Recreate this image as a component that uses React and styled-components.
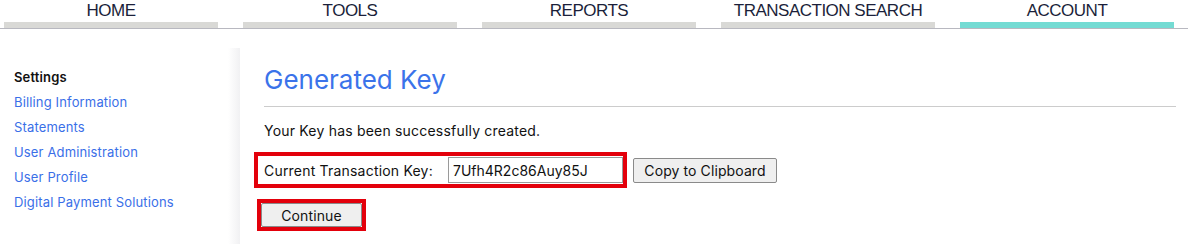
import React from "react";
import styled, { createGlobalStyle } from "styled-components";

const tabs = ["HOME", "TOOLS", "REPORTS", "TRANSACTION SEARCH", "ACCOUNT"];
const links = [
    "Billing Information",
    "Statements",
    "User Administration",
    "User Profile",
    "Digital Payment Solutions",
];

const App = () => {
    return (
        <>
            <GlobalStyle />
            <Nav>
                {tabs.map((t) => (
                    <Tab key={t} active={t === "ACCOUNT"}>
                        <span>{t}</span>
                    </Tab>
                ))}
            </Nav>
            <Body>
                <Sidebar>
                    <SideTitle>Settings</SideTitle>
                    {links.map((l) => (
                        <SideLink key={l} href="#">
                            {l}
                        </SideLink>
                    ))}
                </Sidebar>
                <Main>
                    <Heading>Generated Key</Heading>
                    <Message>Your Key has been successfully created.</Message>
                    <KeyRow>
                        <Highlight>
                            <KeyLabel>Current Transaction Key:</KeyLabel>
                            <KeyInput readOnly value="7Ufh4R2c86Auy85J" />
                        </Highlight>
                        <Button>Copy to Clipboard</Button>
                    </KeyRow>
                    <ContinueBox>
                        <Button wide>Continue</Button>
                    </ContinueBox>
                </Main>
            </Body>
        </>
    );
};

const GlobalStyle = createGlobalStyle`
    body {
        margin: 0;
        background: #fff;
        font-family: Inter, "Noto Sans", sans-serif;
        color: #111;
    }
`;

const Nav = styled.div`
    display: flex;
    gap: 25px;
    padding-left: 4px;
    height: 28px;
    border-bottom: 1px solid #b8b8c0;
`;

const Tab = styled.div`
    width: 214px;
    display: flex;
    flex-direction: column;
    & > span {
        height: 22px;
        line-height: 22px;
        text-align: center;
        font-family: "Liberation Sans", Arial, sans-serif;
        font-size: 17px;
        letter-spacing: -0.5px;
        color: #1b1f3a;
    }
    &::after {
        content: "";
        height: 6px;
        background: ${(p) => (p.active ? "#74dbd3" : "#d9d9d6")};
    }
`;

const Body = styled.div`
    display: flex;
    margin-top: 19px;
    min-height: 196px;
`;

const Sidebar = styled.div`
    width: 240px;
    flex: none;
    display: flex;
    flex-direction: column;
    padding: 20px 0 0 14px;
    box-sizing: border-box;
    background: linear-gradient(to right, #fff 228px, #f1f1f3 240px);
`;

const SideTitle = styled.div`
    font-size: 13px;
    font-weight: 600;
    line-height: 18px;
    letter-spacing: 0.15px;
    color: #111;
    margin-bottom: 7px;
`;

const SideLink = styled.a`
    font-size: 13px;
    line-height: 18px;
    letter-spacing: 0.15px;
    color: #3a6fe8;
    text-decoration: none;
    margin-bottom: 7px;
`;

const Main = styled.div`
    flex: 1;
    padding: 16px 12px 0 24px;
`;

const Heading = styled.h1`
    margin: 0;
    font-size: 26px;
    font-weight: 400;
    line-height: 32px;
    color: #3b73ea;
    padding-bottom: 10px;
    border-bottom: 1px solid #cccccc;
`;

const Message = styled.p`
    margin: 15px 0 0;
    font-size: 14px;
    line-height: 18px;
    letter-spacing: 0.2px;
`;

const KeyRow = styled.div`
    display: flex;
    align-items: center;
    gap: 6px;
    margin: 12px 0 0 -10px;
`;

const Highlight = styled.div`
    display: flex;
    align-items: center;
    height: 28px;
    padding: 0 0 0 6px;
    border: 4px solid #e3000b;
`;

const KeyLabel = styled.span`
    width: 184px;
    font-size: 14px;
    letter-spacing: 0.2px;
`;

const KeyInput = styled.input`
    width: 175px;
    height: 26px;
    box-sizing: border-box;
    border: 1px solid #9a9a9a;
    padding: 0 4px;
    font-family: inherit;
    font-size: 14px;
    color: #111;
    outline: none;
`;

const Button = styled.button`
    height: ${(p) => (p.wide ? "24px" : "25px")};
    width: ${(p) => (p.wide ? "101px" : "144px")};
    box-sizing: border-box;
    background: #efefef;
    border: 1px solid #8a8a8a;
    border-radius: 2px;
    font-family: inherit;
    font-size: 14px;
    letter-spacing: 0.1px;
    color: #111;
    padding: 0;
`;

const ContinueBox = styled.div`
    display: inline-flex;
    margin: 11px 0 0 -7px;
    border: 4px solid #e3000b;
`;

export default App;
